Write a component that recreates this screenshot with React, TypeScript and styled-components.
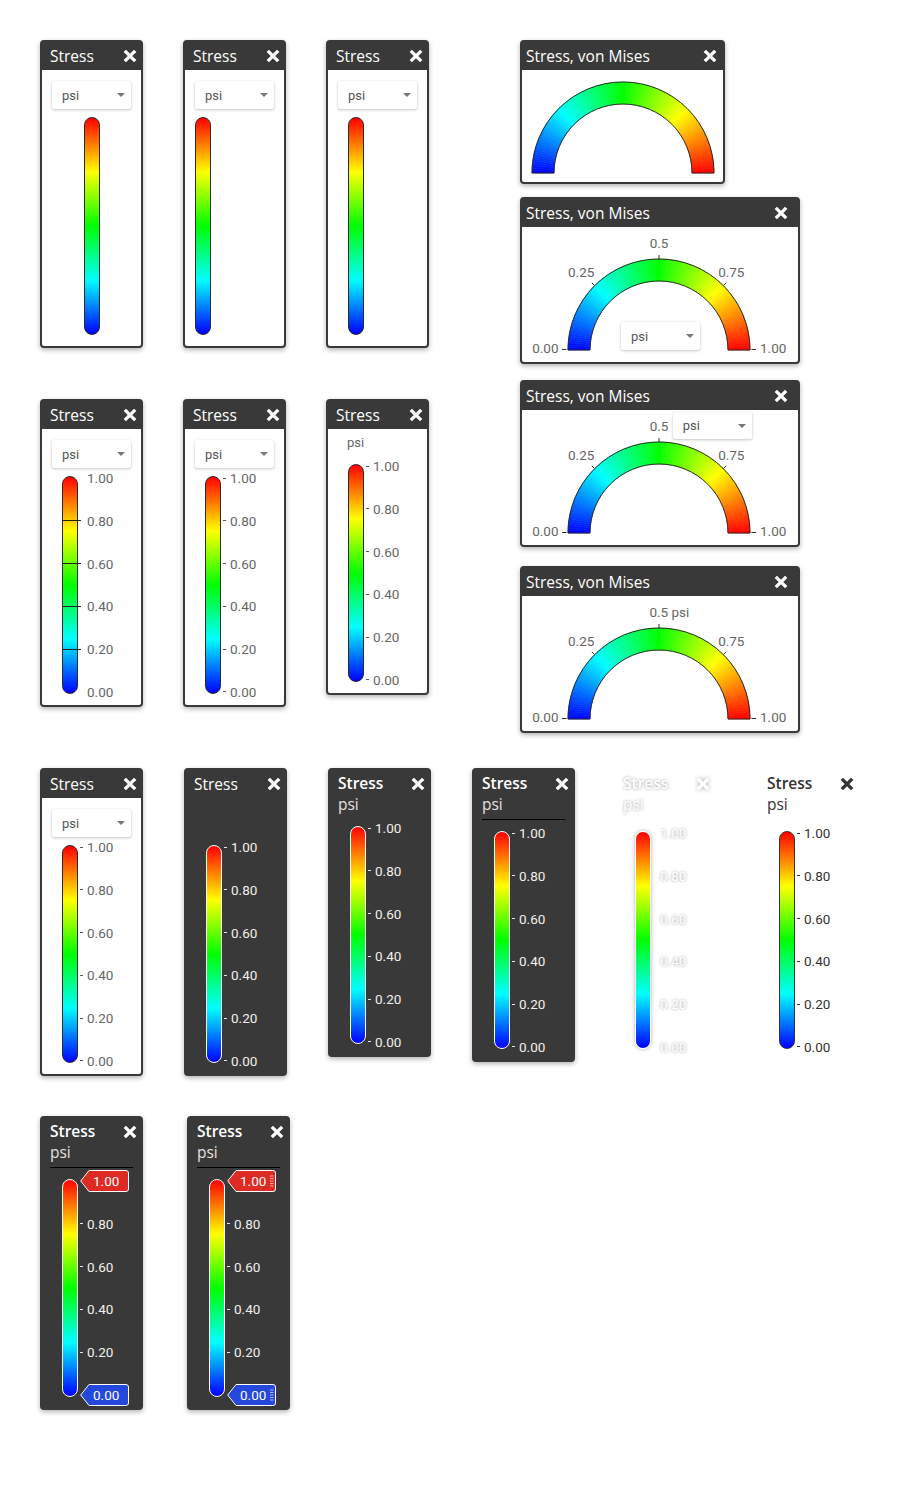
import React from 'react';
import styled, { createGlobalStyle, css } from 'styled-components';

const DARK = '#393939';
const JET =
  'linear-gradient(to bottom, #ff0000 0%, #ffff00 25%, #00ff00 50%, #00ffff 75%, #0000ff 100%)';
const TITLE_FONT = '"Open Sans", "Noto Sans", "Liberation Sans", sans-serif';
const LABEL_FONT = 'Roboto, "Liberation Sans", Arial, sans-serif';

type Tone = 'light' | 'dark' | 'clear' | 'ink';

const palette: Record<Tone, { text: string; head: string; unit: string; edge: string; glow: string; mark: string }> = {
  light: { text: '#666', head: '#fff', unit: '#ddd', edge: '#2b2b2b', glow: 'none', mark: '#555' },
  dark: { text: '#f0f0f0', head: '#fff', unit: '#e2e2e2', edge: '#fff', glow: 'none', mark: '#e8e8e8' },
  clear: { text: '#fff', head: '#fff', unit: '#fff', edge: '#fff', glow: '0 0 3px rgba(0,0,0,0.4)', mark: '#fff' },
  ink: { text: '#333', head: '#333', unit: '#333', edge: '#333', glow: '0 0 3px #fff', mark: '#333' },
};

const GlobalStyle = createGlobalStyle`
  html, body { margin: 0; padding: 0; background: #fff; }
  body { font-family: ${LABEL_FONT}; }
  * { box-sizing: border-box; }
`;

/* ---------- page layout ---------- */

const Page = styled.main`
  width: 900px;
  padding: 40px 0 40px 40px;
`;

const TopSection = styled.section`
  display: flex;
  align-items: flex-start;
  gap: 91px;
`;

const BarGrid = styled.div`
  display: grid;
  grid-template-columns: repeat(3, 103px);
  column-gap: 40px;
  row-gap: 51px;
  align-items: start;
`;

const GaugeColumn = styled.div`
  display: flex;
  flex-direction: column;
  align-items: flex-start;
`;

const LegendRow = styled.section<{ $mt: number; $gap: number }>`
  display: flex;
  align-items: flex-start;
  margin-top: ${(p) => p.$mt}px;
  gap: ${(p) => p.$gap}px;
`;

/* ---------- panel chrome ---------- */

const Panel = styled.div<{ $tone: Tone; $w?: number; $mt?: number; $ml?: number }>`
  width: ${(p) => p.$w ?? 103}px;
  margin-top: ${(p) => p.$mt ?? 0}px;
  margin-left: ${(p) => p.$ml ?? 0}px;
  display: flex;
  flex-direction: column;
  border: 2px solid
    ${(p) => (p.$tone === 'light' || p.$tone === 'dark' ? DARK : 'transparent')};
  border-radius: 4px;
  background: ${(p) => (p.$tone === 'light' ? '#fff' : p.$tone === 'dark' ? DARK : 'transparent')};
  box-shadow: ${(p) =>
    p.$tone === 'light' || p.$tone === 'dark' ? '0 2px 5px rgba(0,0,0,0.3)' : 'none'};
`;

const HeaderBar = styled.header<{ $pl?: number; $pr?: number }>`
  flex: none;
  height: 28px;
  display: flex;
  align-items: center;
  justify-content: space-between;
  padding: 0 ${(p) => p.$pr ?? 4}px 0 ${(p) => p.$pl ?? 8}px;
  background: ${DARK};
  color: #fff;
`;

const Title = styled.h2<{ $strong?: boolean }>`
  margin: 0;
  font-family: ${TITLE_FONT};
  font-size: 15.5px;
  font-weight: ${(p) => (p.$strong ? 600 : 400)};
  line-height: 21px;
  white-space: nowrap;
`;

const StackHead = styled.header<{ $tone: Tone }>`
  flex: none;
  padding: 3px 4px 0 8px;
  color: ${(p) => palette[p.$tone].head};
  text-shadow: ${(p) => palette[p.$tone].glow};
`;

const HeadLine = styled.div`
  display: flex;
  align-items: center;
  justify-content: space-between;
`;

const UnitLine = styled.div<{ $tone: Tone }>`
  font-family: ${TITLE_FONT};
  font-size: 15.5px;
  line-height: 21px;
  color: ${(p) => palette[p.$tone].unit};
`;

const Divider = styled.hr<{ $show: boolean }>`
  flex: none;
  margin: 4px 8px 0;
  border: 0;
  height: 1px;
  background: ${(p) => (p.$show ? '#000' : 'transparent')};
`;

const CloseGlyph = styled.svg<{ $glow?: boolean }>`
  flex: none;
  width: 14px;
  height: 14px;
  ${(p) => p.$glow && 'filter: drop-shadow(0 0 2px rgba(0,0,0,0.35));'}
`;

function Close({ glow }: { glow?: boolean }) {
  return (
    <CloseGlyph viewBox="0 0 14 14" $glow={glow} aria-label="close">
      <path d="M1.8 1.8 L12.2 12.2 M12.2 1.8 L1.8 12.2" stroke="currentColor" strokeWidth={3.3} />
    </CloseGlyph>
  );
}

/* ---------- unit select ---------- */

const Select = styled.div<{ $ghost?: boolean }>`
  flex: none;
  align-self: center;
  width: 79px;
  height: 28px;
  margin-bottom: 8px;
  display: flex;
  align-items: center;
  justify-content: space-between;
  padding: 0 6px 0 10px;
  background: #fff;
  border-radius: 2px;
  box-shadow: 0 1px 3px rgba(0, 0, 0, 0.22), 0 0 1px rgba(0, 0, 0, 0.12);
  font-family: ${LABEL_FONT};
  font-size: 13px;
  color: #555;
  visibility: ${(p) => (p.$ghost ? 'hidden' : 'visible')};
`;

const FloatingSelect = styled(Select)<{ $x: number; $y: number; $h: number }>`
  position: absolute;
  left: ${(p) => p.$x}px;
  top: ${(p) => p.$y}px;
  height: ${(p) => p.$h}px;
  margin: 0;
`;

const Caret = styled.span`
  width: 0;
  height: 0;
  border-left: 4px solid transparent;
  border-right: 4px solid transparent;
  border-top: 4px solid #777;
`;

function UnitSelect({ ghost }: { ghost?: boolean }) {
  return (
    <Select $ghost={ghost}>
      <span>psi</span>
      <Caret />
    </Select>
  );
}

/* ---------- color bar + scale ---------- */

const Body = styled.div<{ $pt: number }>`
  display: flex;
  flex-direction: column;
  padding: ${(p) => p.$pt}px 0 11px;
`;

const Caption = styled.div`
  margin: 6px 0 13px 19px;
  font-family: ${LABEL_FONT};
  font-size: 13px;
  line-height: 16px;
  color: #666;
`;

type Inset = 'center' | number;

const Scale = styled.div<{ $inset: Inset }>`
  display: flex;
  align-self: ${(p) => (p.$inset === 'center' ? 'center' : 'flex-start')};
  margin-left: ${(p) => (p.$inset === 'center' ? 0 : p.$inset)}px;
`;

const ColorBar = styled.div<{ $tone: Tone }>`
  flex: none;
  width: 16px;
  height: 218px;
  border: 1px solid ${(p) => palette[p.$tone].edge};
  border-radius: 8px;
  background: ${JET};
  ${(p) => p.$tone === 'clear' && 'box-shadow: 0 0 4px rgba(0,0,0,0.3);'}
`;

const TickColumn = styled.div`
  display: flex;
  flex-direction: column;
  justify-content: space-between;
  margin: -6px 0 -6px 2px;
`;

const TickRow = styled.div<{ $tone: Tone }>`
  display: flex;
  align-items: center;
  height: 16px;
  font-family: ${LABEL_FONT};
  font-size: 13.5px;
  color: ${(p) => palette[p.$tone].text};
  text-shadow: ${(p) => palette[p.$tone].glow};
  white-space: nowrap;
`;

const Mark = styled.span<{ $kind: 'dash' | 'cross' | 'gap'; $tone: Tone }>`
  flex: none;
  height: 1px;
  ${(p) =>
    p.$kind === 'dash'
      ? css`
          width: 3px;
          margin-right: 4px;
          background: ${palette[p.$tone].mark};
        `
      : css`
          width: 19px;
          margin-left: -18px;
          margin-right: 6px;
          background: ${p.$kind === 'cross' ? '#1e1e1e' : 'transparent'};
        `}
`;

const FlagBox = styled.div`
  position: relative;
  width: 49px;
  height: 22px;
  margin: -3px 0;
  display: flex;
  align-items: center;
  padding-left: 13px;
  font-family: ${LABEL_FONT};
  font-size: 13.5px;
  color: #fff;
`;

const FlagShape = styled.svg`
  position: absolute;
  left: 0;
  top: 0;
  width: 49px;
  height: 22px;
`;

const FlagText = styled.span`
  position: relative;
`;

function Flag({ value, color, grip }: { value: string; color: string; grip?: boolean }) {
  return (
    <FlagBox>
      <FlagShape viewBox="0 0 49 22">
        <path
          d="M0.7 11 L9 0.5 H46 Q48.5 0.5 48.5 3 V19 Q48.5 21.5 46 21.5 H9 Z"
          fill={color}
          stroke="#fff"
          strokeWidth={1}
        />
        {grip &&
          [6, 8.5, 11, 13.5, 16].map((y) => (
            <line key={y} x1={43} x2={46.5} y1={y} y2={y} stroke="#fff" strokeOpacity={0.8} strokeWidth={0.8} />
          ))}
      </FlagShape>
      <FlagText>{value}</FlagText>
    </FlagBox>
  );
}

const VALUES = ['1.00', '0.80', '0.60', '0.40', '0.20', '0.00'];

type LegendProps = {
  tone: Tone;
  head: 'bar' | 'stack';
  divider?: 'line' | 'ghost';
  select?: 'show' | 'ghost';
  caption?: boolean;
  ticks?: 'dash' | 'cross';
  flags?: 'plain' | 'grip';
  inset?: Inset;
  ml?: number;
};

function Legend({ tone, head, divider, select, caption, ticks, flags, inset = 20, ml }: LegendProps) {
  const glow = tone === 'clear';
  return (
    <Panel $tone={tone} $ml={ml}>
      {head === 'bar' ? (
        <HeaderBar>
          <Title>Stress</Title>
          <Close />
        </HeaderBar>
      ) : (
        <StackHead $tone={tone}>
          <HeadLine>
            <Title $strong>Stress</Title>
            <Close glow={glow} />
          </HeadLine>
          <UnitLine $tone={tone}>psi</UnitLine>
        </StackHead>
      )}
      {divider && <Divider $show={divider === 'line'} />}
      <Body $pt={caption ? 0 : 11}>
        {select && <UnitSelect ghost={select === 'ghost'} />}
        {caption && <Caption>psi</Caption>}
        <Scale $inset={inset}>
          <ColorBar $tone={tone} />
          {ticks && (
            <TickColumn>
              {VALUES.map((v, i) => {
                const end = i === 0 || i === VALUES.length - 1;
                if (flags && end) {
                  return (
                    <Flag key={v} value={v} color={i === 0 ? '#dd2a22' : '#2447dc'} grip={flags === 'grip'} />
                  );
                }
                const kind = ticks === 'cross' ? (end ? 'gap' : 'cross') : 'dash';
                return (
                  <TickRow key={v} $tone={tone}>
                    <Mark $kind={kind} $tone={tone} />
                    {v}
                  </TickRow>
                );
              })}
            </TickColumn>
          )}
        </Scale>
      </Body>
    </Panel>
  );
}

/* ---------- gauges ---------- */

const JET_STOPS = [
  [0, 0, 255],
  [0, 255, 255],
  [0, 255, 0],
  [255, 255, 0],
  [255, 0, 0],
];

function jet(v: number) {
  const x = Math.min(Math.max(v, 0), 1) * 4;
  const i = Math.min(Math.floor(x), 3);
  const t = x - i;
  const a = JET_STOPS[i];
  const b = JET_STOPS[i + 1];
  return `rgb(${a.map((c, k) => Math.round(c + (b[k] - c) * t)).join(',')})`;
}

function arcSegments(cx: number, cy: number, R: number, r: number, n = 120) {
  const pt = (rad: number, a: number) =>
    `${(cx + rad * Math.cos(a)).toFixed(2)} ${(cy - rad * Math.sin(a)).toFixed(2)}`;
  const out: { d: string; fill: string }[] = [];
  for (let i = 0; i < n; i++) {
    const v1 = i / n;
    const v2 = (i + 1) / n;
    const a1 = Math.PI * (1 - v1);
    const a2 = Math.PI * (1 - v2);
    out.push({
      d: `M${pt(R, a1)} A${R} ${R} 0 0 1 ${pt(R, a2)} L${pt(r, a2)} A${r} ${r} 0 0 0 ${pt(r, a1)} Z`,
      fill: jet((v1 + v2) / 2),
    });
  }
  return out;
}

const GaugeBody = styled.div<{ $h: number }>`
  position: relative;
  height: ${(p) => p.$h}px;
`;

const GaugeSvg = styled.svg`
  display: block;
  text {
    font-family: ${LABEL_FONT};
    font-size: 13.5px;
    fill: #666;
  }
`;

type GaugeProps = {
  w: number;
  h: number;
  cx: number;
  cy: number;
  pr: number;
  mt?: number;
  scale?: 'plain' | 'unit';
  select?: { x: number; y: number; h: number };
};

function Gauge({ w, h, cx, cy, pr, mt, scale, select }: GaugeProps) {
  const R = 91;
  const r = 69;
  const segs = arcSegments(cx, cy, R, r);
  const outline = `M${cx - R} ${cy} A${R} ${R} 0 0 1 ${cx + R} ${cy} L${cx + r} ${cy} A${r} ${r} 0 0 0 ${cx - r} ${cy} Z`;
  const d45 = Math.SQRT1_2;
  return (
    <Panel $tone="light" $w={w} $mt={mt}>
      <HeaderBar $pl={4} $pr={pr}>
        <Title>Stress, von Mises</Title>
        <Close />
      </HeaderBar>
      <GaugeBody $h={h}>
        <GaugeSvg width={w - 4} height={h} viewBox={`0 0 ${w - 4} ${h}`}>
          {segs.map((s, i) => (
            <path key={i} d={s.d} fill={s.fill} stroke={s.fill} strokeWidth={0.6} />
          ))}
          <path d={outline} fill="none" stroke="#2b2b2b" strokeWidth={1} />
          {scale && (
            <g>
              <g stroke="#333" strokeWidth={1}>
                <line x1={cx} y1={cy - R - 4} x2={cx} y2={cy - R} />
                <line x1={cx - R * d45} y1={cy - R * d45} x2={cx - (R + 4) * d45} y2={cy - (R + 4) * d45} />
                <line x1={cx + R * d45} y1={cy - R * d45} x2={cx + (R + 4) * d45} y2={cy - (R + 4) * d45} />
                <line x1={cx - R - 6} y1={cy - 0.5} x2={cx - R - 1.5} y2={cy - 0.5} />
                <line x1={cx + R + 1.5} y1={cy - 0.5} x2={cx + R + 6} y2={cy - 0.5} />
              </g>
              {scale === 'unit' ? (
                <text x={cx - 9.6} y={21}>
                  0.5 psi
                </text>
              ) : (
                <text x={cx} y={21} textAnchor="middle">
                  0.5
                </text>
              )}
              <text x={cx - 77.8} y={50} textAnchor="middle">
                0.25
              </text>
              <text x={cx + 72.3} y={50} textAnchor="middle">
                0.75
              </text>
              <text x={cx - R - 9.5} y={cy + 3} textAnchor="end">
                0.00
              </text>
              <text x={cx + R + 10} y={cy + 3}>
                1.00
              </text>
            </g>
          )}
        </GaugeSvg>
        {select && (
          <FloatingSelect $x={select.x} $y={select.y} $h={select.h}>
            <span>psi</span>
            <Caret />
          </FloatingSelect>
        )}
      </GaugeBody>
    </Panel>
  );
}

/* ---------- app ---------- */

export default function App() {
  return (
    <>
      <GlobalStyle />
      <Page>
        <TopSection>
          <BarGrid>
            <Legend tone="light" head="bar" select="show" inset="center" />
            <Legend tone="light" head="bar" select="show" inset={10} />
            <Legend tone="light" head="bar" select="show" inset={20} />
            <Legend tone="light" head="bar" select="show" ticks="cross" />
            <Legend tone="light" head="bar" select="show" ticks="dash" />
            <Legend tone="light" head="bar" caption ticks="dash" />
          </BarGrid>
          <GaugeColumn>
            <Gauge w={205} h={112} cx={101} cy={103} pr={6} />
            <Gauge w={280} h={135} cx={137} cy={123} pr={10} mt={13} scale="plain" select={{ x: 99, y: 95, h: 28 }} />
            <Gauge w={280} h={135} cx={137} cy={123} pr={10} mt={16} scale="plain" select={{ x: 150.7, y: 2, h: 27 }} />
            <Gauge w={280} h={135} cx={137} cy={123} pr={10} mt={19} scale="unit" />
          </GaugeColumn>
        </TopSection>
        <LegendRow $mt={35} $gap={41}>
          <Legend tone="light" head="bar" select="show" ticks="dash" />
          <Legend tone="dark" head="bar" select="ghost" ticks="dash" />
          <Legend tone="dark" head="stack" ticks="dash" />
          <Legend tone="dark" head="stack" divider="line" ticks="dash" />
          <Legend tone="clear" head="stack" divider="ghost" ticks="dash" ml={-3} />
          <Legend tone="ink" head="stack" divider="ghost" ticks="dash" />
        </LegendRow>
        <LegendRow $mt={40} $gap={44}>
          <Legend tone="dark" head="stack" divider="line" ticks="dash" flags="plain" />
          <Legend tone="dark" head="stack" divider="line" ticks="dash" flags="grip" />
        </LegendRow>
      </Page>
    </>
  );
}
